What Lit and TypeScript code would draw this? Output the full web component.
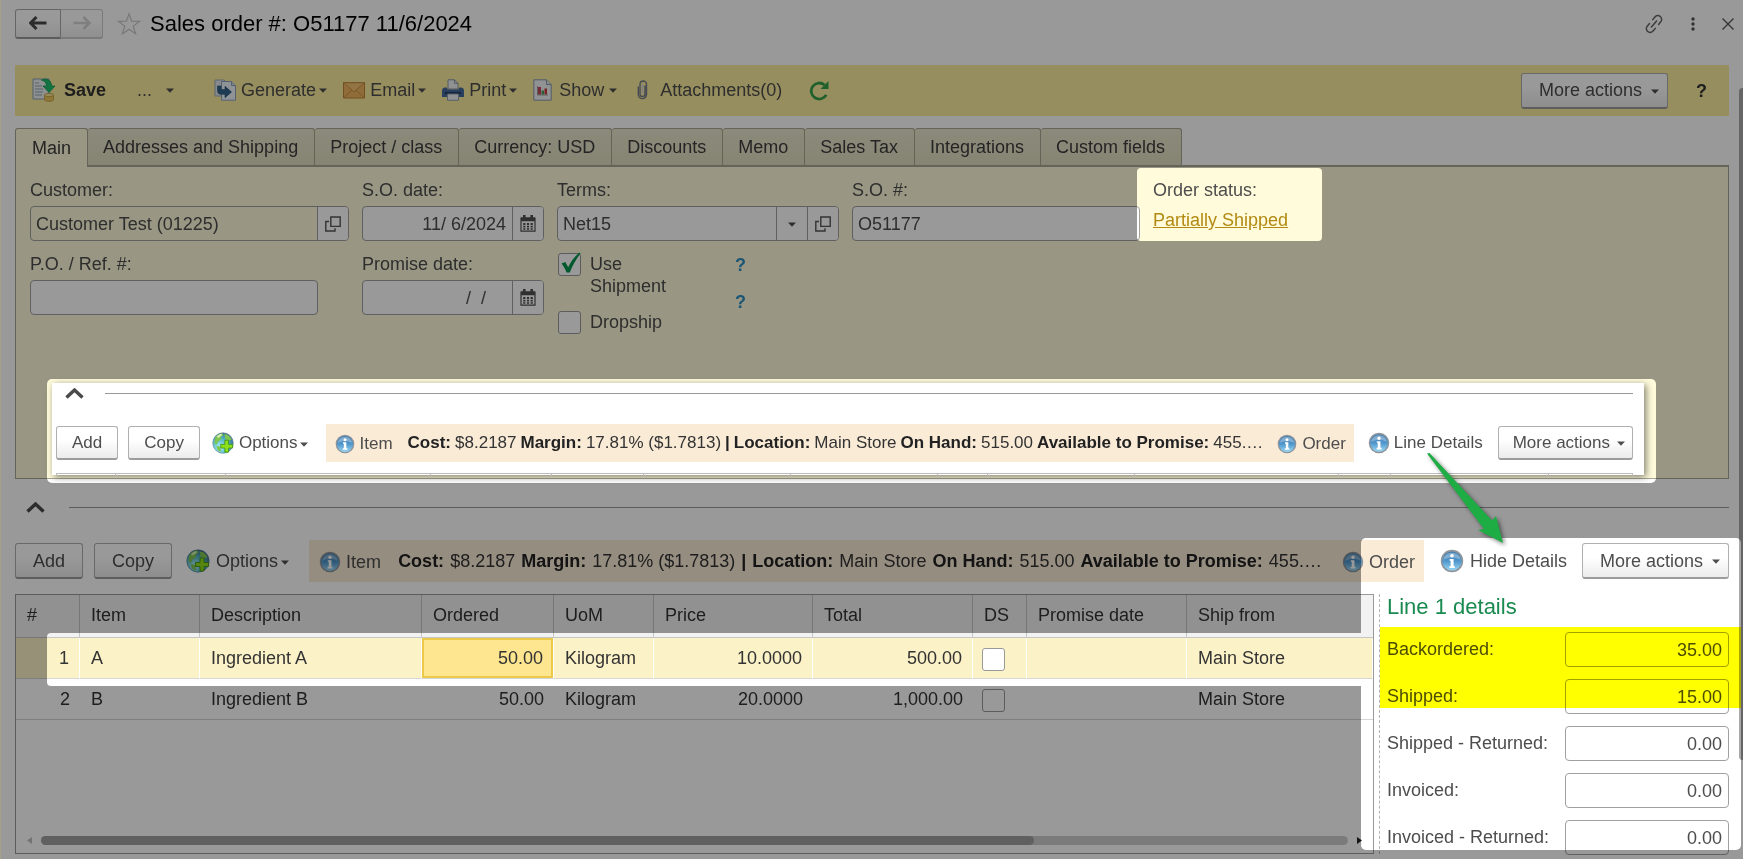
import { LitElement, html, css, svg, nothing } from "lit";
import { customElement, property } from "lit/decorators.js";
import { classMap } from "lit/directives/class-map.js";

const caret = html`<svg class="caret" width="8" height="7" viewBox="0 0 8 7" aria-hidden="true"><path d="M0 2.400h8L4 6.800z" fill="currentColor" /></svg>`;

const icons = {
  back: html`<svg width="18" height="14" viewBox="0 0 18 14"><path d="M7.500 1 1.600 7l5.900 6M2 7h15.500" fill="none" stroke="#4a4a4a" stroke-width="3" /></svg>`,
  forward: html`<svg width="18" height="14" viewBox="0 0 18 14"><path d="m10.500 1 5.900 6-5.900 6M16 7H.5" fill="none" stroke="#d4d4d4" stroke-width="2.600" /></svg>`,
  star: html`<svg width="24" height="24" viewBox="0 0 24 24"><path d="m12 1.800 2.600 7.300 8 .2-6.300 4.800 2.300 7.600-6.600-4.500-6.600 4.500 2.300-7.600L1.400 9.300l8-.2z" fill="none" stroke="#c8c8c8" stroke-width="1.200" /></svg>`,
  link: html`<svg width="20" height="20" viewBox="0 0 20 20"><g fill="none" stroke="#666" stroke-width="1.500" stroke-linecap="round" transform="rotate(-50 10 10)"><path d="M7.500 6.200H4a3.800 3.800 0 0 0 0 7.600h3.500M12.500 6.200H16a3.800 3.800 0 0 1 0 7.600h-3.500M6 10h8" /></g></svg>`,
  dots: html`<svg width="4" height="14" viewBox="0 0 4 14"><g fill="#555"><circle cx="2" cy="2" r="1.700" /><circle cx="2" cy="7" r="1.700" /><circle cx="2" cy="12" r="1.700" /></g></svg>`,
  close: html`<svg width="12" height="12" viewBox="0 0 12 12"><path d="m.5.5 11 11m0-11-11 11" stroke="#555" stroke-width="1.300" /></svg>`,
  save: html`<svg width="24" height="24" viewBox="0 0 24 24">
    <path d="M1 1h16v20H1z" fill="#eef2f2" stroke="#8aa0b4" />
    <path d="M3 5h4M3 8h7M3 11h8M3 14h8M3 17h7" stroke="#8ea3b5" stroke-width="1.200" />
    <path d="M9.500 2C15-.5 19.500 2.500 19.500 8H23l-6 6.500L11 8h3.500c0-3-1.500-5-5-6z" fill="#1fc070" stroke="#0f9a52" stroke-width=".8" />
    <path d="M12.500 17v4.500c0 2.400 9 2.400 9 0V17z" fill="#eec65c" stroke="#c09a3a" stroke-width=".8" /><ellipse cx="17" cy="17" rx="4.500" ry="1.700" fill="#fbe49c" stroke="#c09a3a" stroke-width=".8" />
  </svg>`,
  generate: html`<svg width="22" height="22" viewBox="0 0 22 22">
    <path d="M1 1h9l3 3v13H1z" fill="#dfe7ee" stroke="#9aa9b9" /><path d="M7.500 2.500h10l4 4v14.700h-14z" fill="#eef4fa" stroke="#8ba2ba" /><path d="M17.500 2.500v4h4" fill="#d3e0ec" stroke="#8ba2ba" />
    <path d="M3.500 7H7v3.500h4V7.300l6.500 5.700-6.500 5.700v-3.400H7c-2.500 0-3.500-1.500-3.500-4z" fill="#33638c" stroke="#27506f" stroke-width=".6" />
  </svg>`,
  email: html`<svg width="22" height="18" viewBox="0 0 22 18"><path d="M.5 1.500h21v15.500H.5z" fill="#eeb560" stroke="#bd8436" /><path d="m1 16.500 8-7.500M21 16.500 13 9" stroke="#cb9244" fill="none" /><path d="m.8 1.800 10.200 9.200L21.200 1.800z" fill="#f3c273" stroke="#cb9244" /></svg>`,
  print: html`<svg width="22" height="22" viewBox="0 0 22 22"><path d="M6 10V.8h6.500L16 4.300V10z" fill="#f0f2f4" stroke="#8796a5" /><path d="M12.500.8v3.500H16" fill="none" stroke="#8796a5" /><path d="M2.500 8.500h2.200l1 2h10.600l1-2h2.200Q22 9 22 11.500V18H0v-6.500Q0 9 2.500 8.500z" fill="#44699c" /><path d="M3 13h16v2H3z" fill="#243f66" /><path d="M5.500 15h11v6.300h-11z" fill="#f0f2f5" stroke="#93a1b0" /></svg>`,
  show: html`<svg width="19" height="22" viewBox="0 0 19 22"><path d="M.8.8h12.700l4.700 4.700v15.700H.8z" fill="#f0f3f6" stroke="#8a9aab" /><path d="M13.500.8v4.700h4.700" fill="#dde6ee" stroke="#8a9aab" /><path d="M5 8h3v7.500H5z" fill="#c8475c" /><path d="M8.500 11.500H11v4H8.500z" fill="#4b9b5c" /><path d="M11.500 9.500H14v6h-2.500z" fill="#cc3a3a" /><path d="M4.500 7v9H15" fill="none" stroke="#888" stroke-width=".8" /></svg>`,
  clip: html`<svg width="11" height="20" viewBox="0 0 11 20"><path d="M8 5.500v8.500a2.500 2.500 0 0 1-5 0V4.200a3.200 3.200 0 0 1 6.500 0v10.300a4.100 4.100 0 0 1-8.200 0V6.500" fill="none" stroke="#777d88" stroke-width="1.400" /><path d="M5.500 4.500v9" stroke="#d3d7de" stroke-width="1.600" /></svg>`,
  refresh: html`<svg width="20" height="21" viewBox="0 0 20 21"><path d="M17.300 14.800A8 8 0 1 1 15.500 5" fill="none" stroke="#35a14a" stroke-width="2.800" /><path d="M19.500 1v8h-8z" fill="#35a14a" /></svg>`,
  open: html`<svg width="16" height="16" viewBox="0 0 16 16"><path d="M5.800 1h9.400v9.400H5.800zM4 5.500H.8V15H10v-2.800" fill="none" stroke="#555" stroke-width="1.400" /></svg>`,
  calendar: html`<svg width="16" height="17" viewBox="0 0 16 17"><path d="M1 3h14v13.200H1z" fill="none" stroke="#505050" stroke-width="1.200" /><path d="M1 2.600h14v3.600H1zM3 0h2.600v4H3zM10.400 0H13v4h-2.600z" fill="#505050" /><path d="M3.200 8h2.200v2H3.200zM6.900 8h2.200v2H6.900zM10.600 8h2.200v2h-2.200zM3.200 10.800h2.200v1.800H3.200zM6.900 10.800h2.200v1.800H6.900zM10.600 10.800h2.200v1.800h-2.200zM3.200 13.300h2.200v1.500H3.200zM6.900 13.300h2.200v1.500H6.900zM10.600 13.300h2.200v1.500h-2.200z" fill="#505050" /></svg>`,
  check: html`<svg class="tick" width="22" height="24" viewBox="0 0 22 24" aria-hidden="true"><path d="m1.500 11.500 3.800-1.600 2.900 5.300C11 9.500 14.500 4.500 19.500.5l1 .9C15.800 7.500 12.500 13.500 9.800 20.500H6.600C5.300 17 3.600 14 1.500 11.500z" fill="#00944a" /></svg>`,
};

const infoIcon = svg`
  <defs><linearGradient id="info-face" x1="0" y1="0" x2="0" y2="1"><stop offset="0" stop-color="#4a80b0" /><stop offset=".5" stop-color="#4f96cc" /><stop offset="1" stop-color="#9bd8f5" /></linearGradient></defs>
  <circle cx="12" cy="12" r="11.200" fill="#8d949c" /><circle cx="12" cy="12" r="9.600" fill="url(#info-face)" />
  <path d="M3.500 10.500a8.700 8.700 0 0 1 17 0q-8.500-4-17 0z" fill="#fff" opacity=".3" />
  <circle cx="12" cy="6.800" r="1.800" fill="#fff" /><path d="M9.600 10h4v7.200h1.200V19H9.400v-1.800h1.200v-5.400h-1z" fill="#fff" />`;

const globeIcon = svg`
  <defs><radialGradient id="sea" cx=".35" cy=".7" r=".8"><stop offset="0" stop-color="#a8f2f4" /><stop offset=".55" stop-color="#4fb2c4" /><stop offset="1" stop-color="#3b5d80" /></radialGradient></defs>
  <circle cx="12" cy="12" r="11.200" fill="url(#sea)" stroke="#587389" stroke-width=".6" />
  <path d="M3.500 6c2-3 5-4.500 8-4.500l1 2-3 2 1 2-4 3-2 4-2-3zM13.500 2.500c4 0 7 3 8 6l-4 1-3-2zM5 15l4 1 1 5.500c-3 0-5-3-5-6.500z" fill="#7fc552" />
  <path d="M5 5c1-1 3-2.500 5-3l1 1.500-4 3z" fill="#e6f6c9" opacity=".8" />
  <path d="M14 9h4v4.500h4.500v4H18V22h-4v-4.500H9.500v-4H14z" fill="#8fe01c" stroke="#3f9410" stroke-width=".9" />`;

/** Command bar that sits over the order lines. */
@customElement("line-commands")
export class LineCommands extends LitElement {
  @property({ type: Boolean, reflect: true }) compact = false;
  @property() toggle = "Hide Details";

  static styles = css`
    :host { display: block; --icon: 24px; --info: 22px; --gap: 11px; font: 18px/22px "Liberation Sans", Arial, sans-serif; color: #4d4d4d; }
    :host([compact]) { --icon: 22px; --info: 20px; --gap: 10px; font-size: 17px; line-height: 20px; }
    .collapse { display: flex; align-items: center; height: 57px; margin-bottom: 4px; }
    :host([compact]) .collapse { height: 21px; margin-bottom: 20px; }
    .chevron { border: 0; background: none; padding: 0; display: flex; margin: 0 24px 0 11px; }
    :host([compact]) .chevron { margin: 0 21px 0 9px; }
    .rule { flex: 1; height: 1px; background: #999; }
    .bar { display: flex; align-items: center; white-space: nowrap; }
    button { font: inherit; color: inherit; }
    .btn { box-sizing: border-box; height: 36px; padding: 0 17px; border: 1px solid #b0b0b0; border-bottom: 2px solid #9c9c9c; border-radius: 3px; background: linear-gradient(#fff 40%, #ececec); margin-right: var(--gap); }
    :host([compact]) .btn { height: 34px; padding: 0 15px; }
    .btn.more, :host([compact]) .btn.more { display: flex; align-items: center; gap: 9px; padding: 0 8px 0 17px; margin: 0 0 0 15px; }
    :host([compact]) .btn.more { gap: 7px; padding: 0 7px 0 14px; }
    .flat { border: 0; background: none; padding: 0; display: flex; align-items: center; gap: 6px; }
    .options { margin: 0 20px 0 3px; gap: 3px; }
    .options .globe { width: var(--icon); height: var(--icon); margin-right: 3px; }
    :host([compact]) .options { margin: 0 18px 0 2px; gap: 2px; }
    .strip { flex: 1; min-width: 0; display: flex; align-items: center; height: 42px; background: #faebd7; padding: 0 9px 0 10px; margin-right: 16px; }
    :host([compact]) .strip { height: 38px; padding: 0 8px 0 9px; margin-right: 14px; }
    .strip .flat { gap: 5px; padding-top: 2px; }
    .flat .info { width: var(--info); height: var(--info); }
    .details .info { width: var(--icon); height: var(--icon); }
    :host([compact]) .details { gap: 4px; }
    .facts { flex: 1; min-width: 0; overflow: hidden; display: flex; gap: 6px; margin-left: 17px; color: #333; }
    :host([compact]) .facts { gap: 4px; margin-left: 15px; }
    .facts b { color: #222; }
  `;

  private info() {
    return html`<svg class="info" viewBox="0 0 24 24" aria-hidden="true">${infoIcon}</svg>`;
  }

  render() {
    return html`
      <div class="collapse">
        <button class="chevron" aria-label="Collapse"><svg width="19" height="11" viewBox="0 0 19 11"><path d="m1.500 9.500 8-7.500 8 7.500" fill="none" stroke="#4a4a4a" stroke-width="3.400" /></svg></button>
        <span class="rule"></span>
      </div>
      <div class="bar">
        <button class="btn">Add</button>
        <button class="btn">Copy</button>
        <button class="flat options"><svg class="globe" viewBox="0 0 24 24" aria-hidden="true">${globeIcon}</svg>Options${caret}</button>
        <div class="strip">
          <button class="flat">${this.info()}Item</button>
          <div class="facts">
            <b>Cost:</b><span>$8.2187</span><b>Margin:</b><span>17.81% ($1.7813)</span><b>|</b><b>Location:</b><span>Main Store</span><b>On Hand:</b><span>515.00</span><b>Available to Promise:</b><span>455.…</span>
          </div>
          <button class="flat">${this.info()}Order</button>
        </div>
        <button class="flat details">${this.info()}${this.toggle}</button>
        <button class="btn more">More actions ${caret}</button>
      </div>
    `;
  }
}

const tabs = ["Main", "Addresses and Shipping", "Project / class", "Currency: USD", "Discounts", "Memo", "Sales Tax", "Integrations", "Custom fields"];
const columns = ["#", "Item", "Description", "Ordered", "UoM", "Price", "Total", "DS", "Promise date", "Ship from"];
const lines = [
  { n: 1, item: "A", text: "Ingredient A", qty: "50.00", uom: "Kilogram", price: "10.0000", total: "500.00", from: "Main Store" },
  { n: 2, item: "B", text: "Ingredient B", qty: "50.00", uom: "Kilogram", price: "20.0000", total: "1,000.00", from: "Main Store" },
];
const details = [
  ["Backordered:", "35.00"],
  ["Shipped:", "15.00"],
  ["Shipped - Returned:", "0.00"],
  ["Invoiced:", "0.00"],
  ["Invoiced - Returned:", "0.00"],
];
const previewColumns = [59, 110, 205, 121, 92, 147, 147, 50, 147, 204, 52, 158];

@customElement("app-root")
export class AppRoot extends LitElement {
  static styles = css`
    :host { display: flex; flex-direction: column; position: relative; box-sizing: border-box; height: 100vh; min-height: 700px; overflow: hidden; padding: 0 14px 5px 14px; border-left: 1px solid #a89f8c; background: #fff; font: 18px/22px "Liberation Sans", Arial, sans-serif; color: #4d4d4d; }
    button, input, select { font: inherit; color: inherit; margin: 0; }
    svg { flex: none; }
    .title { display: flex; align-items: center; height: 29px; padding: 9px 0 27px; }
    .nav { box-sizing: border-box; height: 30px; padding: 0; display: flex; align-items: center; justify-content: center; border: 1px solid #aaa; border-bottom: 2px solid #999; background: linear-gradient(#fff 40%, #f0f0f0); width: 46px; border-radius: 3px 0 0 3px; }
    .nav.off { width: 42px; border-color: #ccc; border-left: 0; border-radius: 0 3px 3px 0; }
    .bare { border: 0; background: none; padding: 0; display: flex; align-items: center; }
    .star { margin: 0 9px 0 14px; }
    h1 { margin: 0; font-size: 22px; line-height: 28px; font-weight: 400; color: #000; flex: 1; }
    .corner { display: flex; align-items: center; gap: 27px; margin-right: -5px; }
    .toolbar { display: flex; align-items: center; height: 51px; background: #fbed9e; padding: 0 22px 0 17px; white-space: nowrap; }
    .cmd { gap: 5px; margin-right: 16px; padding-bottom: 2px; }
    .cmd .caret { margin-left: -2px; }
    .cmd.save { gap: 8px; font-weight: 700; color: #333; margin-right: 31px; }
    .cmd.dots { gap: 16px; margin-right: 40px; }
    .cmd.show { gap: 7px; margin-right: 20px; }
    .cmd.attach { gap: 12px; margin-right: 27px; }
    .more { box-sizing: border-box; height: 36px; border: 1px solid #b0b0b0; border-bottom: 2px solid #9c9c9c; border-radius: 3px; background: linear-gradient(#fff 40%, #ececec); display: flex; align-items: center; gap: 9px; padding: 0 8px 0 17px; margin: 0 28px 0 auto; }
    .help { font-weight: 700; color: #333; }
    .tabs { display: flex; margin-top: 12px; height: 37px; white-space: nowrap; }
    .tab { box-sizing: content-box; height: 36px; padding: 0 16px 0 15px; border: 1px solid #a9a793; border-width: 1px 1px 0 0; border-radius: 3px 3px 0 0; background: linear-gradient(#e9e7cd, #e0ddc0); color: #3d3d3d; }
    .tab.on { position: relative; height: 38px; padding: 0 16px; border-left-width: 1px; background: #fffbdb; }
    .panel { box-sizing: border-box; flex: none; height: 314px; border: 1px solid #a9a793; border-top: 2px solid #a9a793; background: #fffbdb; padding: 12px 14px; }
    .form { display: grid; grid-template-columns: 319px 182px 282px 288px 1fr; column-gap: 13px; row-gap: 12px; align-items: start; }
    .cap { display: block; margin-bottom: 5px; }
    .field { box-sizing: border-box; display: flex; height: 35px; border: 1px solid #a0a0a0; border-radius: 4px; background: #fff; overflow: hidden; }
    .field.tinted { background: #fffbdb; }
    .field.narrow { width: 288px; }
    .field input, .field select { flex: 1; min-width: 0; width: 0; border: 0; background: transparent; padding: 0 6px 0 5px; outline: 0; appearance: none; }
    .field.right input { text-align: right; }
    .field button { box-sizing: border-box; width: 31px; border: 0; border-left: 1px solid #a0a0a0; padding: 0; background: #fff; display: flex; align-items: center; justify-content: center; }
    .link { display: inline-block; margin-top: 3px; color: #b28a12; text-decoration: underline; }
    .checks { display: grid; grid-template-columns: 24px 120px 1fr; column-gap: 8px; row-gap: 14px; margin-left: 1px; }
    .box { position: relative; display: flex; align-self: start; }
    .box input { box-sizing: border-box; width: 23px; height: 23px; border: 1px solid #999; border-radius: 3px; appearance: none; background: #fff; }
    .tick { position: absolute; left: 2px; top: -1px; }
    .checks label { width: 90px; }
    .q { color: #2f8fc4; font-weight: 700; line-height: 22px; height: 22px; margin-left: 17px; }
    .qs { grid-column: 3; grid-row: 1 / 3; display: flex; flex-direction: column; gap: 15px; padding-top: 1px; }
    .work { flex: 1; min-height: 0; margin-top: 12px; display: flex; }
    .grid { flex: 1; min-width: 0; box-sizing: border-box; border: 1px solid #999; display: flex; flex-direction: column; justify-content: space-between; }
    table { width: 100%; border-collapse: separate; border-spacing: 0; table-layout: fixed; color: #333; }
    th { box-sizing: border-box; height: 43px; padding: 0 11px 2px; text-align: left; font-weight: 400; background: #f2f2f2; border-right: 1px solid #c6c6c6; border-bottom: 1px solid #c6c6c6; }
    td { box-sizing: border-box; height: 41px; padding: 0 10px 0 11px; border-bottom: 1px solid #d6d6d6; white-space: nowrap; }
    th:last-child { border-right: 0; }
    tr.sel td { background: #fcf2c8; border-right: 1px solid #fff; }
    tr.sel td.cur { background: #fee690; box-shadow: inset 0 0 0 2px #edc94a; }
    .num { text-align: right; }
    .c0 { width: 64px; } .c1 { width: 120px; } .c2 { width: 222px; } .c3 { width: 132px; } .c4 { width: 100px; } .c5 { width: 159px; } .c6 { width: 160px; } .c7 { width: 54px; } .c8 { width: 160px; }
    td .box { margin-left: -2px; padding-top: 2px; }
    .hscroll { display: flex; align-items: center; gap: 9px; height: 9px; padding: 0 11px; margin-bottom: 8px; color: #333; }
    .track { flex: 1; height: 9px; border-radius: 5px; background: #cdcdcd; }
    .thumb { width: 76%; height: 9px; border-radius: 5px; background: #a0a0a0; }
    .side { width: 350px; margin-left: 5px; box-sizing: border-box; border-left: 1px dashed #b5b5b5; padding-left: 7px; }
    h2 { margin: 0 0 12px; font-size: 22px; line-height: 26px; font-weight: 400; color: #1a8a50; }
    .row { display: flex; align-items: center; justify-content: space-between; margin-bottom: 12px; }
    .row .field { width: 164px; background: #fff; }
    .row label { padding-bottom: 1px; }
    .vscroll { position: absolute; right: -3px; top: 88px; width: 7px; height: 672px; border-radius: 4px; background: #a8a8a8; }
    .marker { position: absolute; right: 2px; top: 627px; width: 361px; height: 81px; background: #ff0; mix-blend-mode: multiply; }
    .dim { position: absolute; inset: 0 0 0 -1px; width: calc(100% + 1px); height: 100%; pointer-events: none; }
    .hole-side { x: calc(100% - 382px); }
    .preview { position: absolute; left: 51px; right: 99px; top: 383px; height: 92px; box-sizing: border-box; background: #fff; padding: 0 11px 0 4px; box-shadow: 2px 2px 7px rgba(0, 0, 0, 0.5); }
    .peek { display: flex; height: 2px; margin-top: 11px; border: 1px solid #bbb; border-width: 1px 1px 0; }
    .peek span { border-right: 1px solid #bbb; box-sizing: border-box; }
    .arrow { position: absolute; right: 230px; top: 445px; filter: drop-shadow(2px 2px 2px rgba(0, 0, 0, 0.5)); }
  `;

  private command(cls: string, icon: unknown, label: string, drop = true) {
    return html`<button class="bare cmd ${cls}">${icon}${label}${drop ? caret : nothing}</button>`;
  }

  private dateField(id: string, label: string, value: string) {
    return html`<div>
      <label class="cap" for=${id}>${label}</label>
      <div class="field right"><input id=${id} .value=${value} /><button aria-label="Choose date">${icons.calendar}</button></div>
    </div>`;
  }

  render() {
    return html`
      <header class="title">
        <button class="nav" aria-label="Back">${icons.back}</button>
        <button class="nav off" aria-label="Forward">${icons.forward}</button>
        <button class="bare star" aria-label="Favorite">${icons.star}</button>
        <h1>Sales order #: O51177 11/6/2024</h1>
        <div class="corner">
          <button class="bare" aria-label="Copy link">${icons.link}</button>
          <button class="bare" aria-label="Menu">${icons.dots}</button>
          <button class="bare" aria-label="Close">${icons.close}</button>
        </div>
      </header>

      <div class="toolbar">
        ${this.command("save", icons.save, "Save", false)}
        ${this.command("dots", nothing, "...")}
        ${this.command("", icons.generate, "Generate")}
        ${this.command("", icons.email, "Email")}
        ${this.command("", icons.print, "Print")}
        ${this.command("show", icons.show, "Show")}
        ${this.command("attach", icons.clip, "Attachments(0)", false)}
        <button class="bare" aria-label="Refresh">${icons.refresh}</button>
        <button class="more">More actions ${caret}</button>
        <button class="bare help">?</button>
      </div>

      <div class="tabs" role="tablist">
        ${tabs.map((t, i) => html`<button role="tab" class=${classMap({ tab: true, on: i === 0 })} aria-selected=${i === 0}>${t}</button>`)}
      </div>
      <section class="panel">
        <div class="form">
          <div>
            <label class="cap" for="customer">Customer:</label>
            <div class="field tinted"><input id="customer" .value=${"Customer Test (01225)"} /><button aria-label="Open customer">${icons.open}</button></div>
          </div>
          ${this.dateField("so-date", "S.O. date:", "11/ 6/2024")}
          <div>
            <label class="cap" for="terms">Terms:</label>
            <div class="field">
              <select id="terms"><option>Net15</option></select>
              <button aria-label="Choose terms">${caret}</button>
              <button aria-label="Open terms">${icons.open}</button>
            </div>
          </div>
          <div>
            <label class="cap" for="so-number">S.O. #:</label>
            <div class="field"><input id="so-number" .value=${"O51177"} /></div>
          </div>
          <div><span class="cap">Order status:</span><a class="link" href="#status">Partially Shipped</a></div>

          <div>
            <label class="cap" for="po">P.O. / Ref. #:</label>
            <div class="field narrow"><input id="po" /></div>
          </div>
          ${this.dateField("promise", "Promise date:", "/  /    ")}
          <div class="checks">
            <span class="box"><input type="checkbox" id="use-shipment" checked />${icons.check}</span>
            <label for="use-shipment">Use Shipment</label>
            <span class="box"><input type="checkbox" id="dropship" /></span>
            <label for="dropship">Dropship</label>
            <div class="qs"><button class="bare q">?</button><button class="bare q">?</button></div>
          </div>
        </div>
      </section>

      <line-commands toggle="Hide Details"></line-commands>

      <div class="work">
        <div class="grid">
          <table>
            <thead><tr>${columns.map((c, i) => html`<th class="c${i}">${c}</th>`)}</tr></thead>
            <tbody>
              ${lines.map((l, i) => html`<tr class=${classMap({ sel: i === 0 })}>
                <td class="num">${l.n}</td><td>${l.item}</td><td>${l.text}</td>
                <td class=${classMap({ num: true, cur: i === 0 })}>${l.qty}</td>
                <td>${l.uom}</td><td class="num">${l.price}</td><td class="num">${l.total}</td>
                <td><span class="box"><input type="checkbox" aria-label="Dropship line ${l.n}" /></span></td>
                <td></td><td>${l.from}</td>
              </tr>`)}
            </tbody>
          </table>
          <div class="hscroll">
            <svg width="5" height="7" viewBox="0 0 5 7"><path d="M5 0v7L0 3.500z" fill="#c0c0c0" /></svg>
            <div class="track"><div class="thumb"></div></div>
            <svg width="5" height="7" viewBox="0 0 5 7"><path d="M0 0v7l5-3.500z" fill="#222" /></svg>
          </div>
        </div>
        <aside class="side">
          <h2>Line 1 details</h2>
          ${details.map(([k, v], i) => html`<div class="row"><label for="d${i}">${k}</label><div class="field right"><input id="d${i}" .value=${v} /></div></div>`)}
        </aside>
      </div>

      <div class="vscroll"></div>
      <div class="marker"></div>

      <svg class="dim" aria-hidden="true">
        <mask id="holes">
          <rect width="100%" height="100%" fill="#fff" />
          <rect x="1137" y="168" width="185" height="73" rx="4" fill="#000" />
          <rect x="47" y="379" width="1609" height="104" rx="5" fill="#000" />
          <rect x="47" y="633" width="1330" height="53" rx="4" fill="#000" />
          <rect class="hole-side" y="538" width="380" height="312" rx="5" fill="#000" />
        </mask>
        <rect width="100%" height="100%" fill="#000" fill-opacity=".4" mask="url(#holes)" />
      </svg>

      <div class="preview">
        <line-commands compact toggle="Line Details"></line-commands>
        <div class="peek">${previewColumns.map((w) => html`<span style="width:${w}px"></span>`)}</div>
      </div>

      <svg class="arrow" width="90" height="104" viewBox="0 0 90 104" aria-hidden="true">
        <path d="M4 8.500 6.500 8 69 75.500 73 71l7 27-25-13 6-1z" fill="#1eac44" />
      </svg>
    `;
  }
}
